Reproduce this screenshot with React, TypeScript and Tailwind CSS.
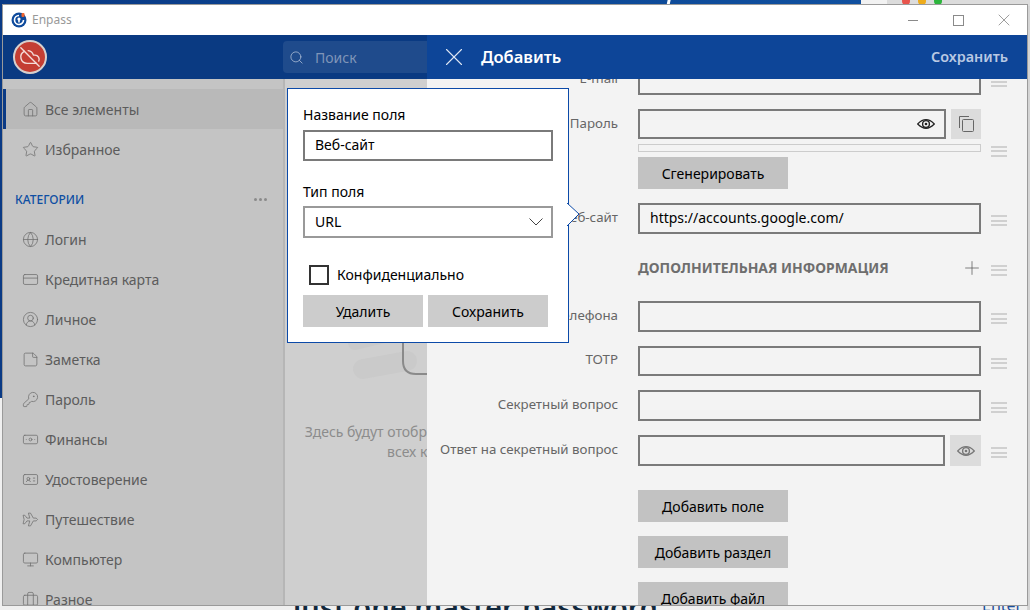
import React from "react";
import {
  Home, Star, Globe, CreditCard, CircleUserRound, StickyNote, KeyRound, Banknote, IdCard, Monitor, Briefcase,
  Search, X, Plus, CloudOff,
} from "lucide-react";

const font = "font-['Noto_Sans','Open_Sans',sans-serif]";

function PlaneIcon({ size, strokeWidth, className }: { size: number; strokeWidth: number; className?: string }) {
  return (
    <svg width={size} height={size} viewBox="0 0 24 24" fill="none" stroke="currentColor" strokeWidth={strokeWidth} strokeLinejoin="round" className={className}>
      <path d="M1.5 6 L4 6 L7 10 L11 10 L9 3 L12 3 L16 10 L20 10 Q24 12 20 14 L16 14 L12 21 L9 21 L11 14 L7 14 L4 18 L1.5 18 L3 12 Z" />
    </svg>
  );
}

function EyeIcon({ className }: { className?: string }) {
  return (
    <svg width="18" height="14" viewBox="0 0 18 14" fill="none" stroke="currentColor" className={className}>
      <path d="M0.7 7 Q9 -1.6 17.3 7 Q9 15.6 0.7 7 Z" strokeWidth="1.2" />
      <circle cx="9" cy="7" r="3.4" strokeWidth="1.4" />
      <circle cx="9" cy="7" r="1.3" fill="currentColor" stroke="none" />
    </svg>
  );
}

const cats = [
  ["Логин", Globe],
  ["Кредитная карта", CreditCard],
  ["Личное", CircleUserRound],
  ["Заметка", StickyNote],
  ["Пароль", KeyRound],
  ["Финансы", Banknote],
  ["Удостоверение", IdCard],
  ["Путешествие", PlaneIcon],
  ["Компьютер", Monitor],
  ["Разное", Briefcase],
] as const;

function NavRow({ label, Icon, active }: { label: string; Icon: any; active?: boolean }) {
  return (
    <div className={`h-10 shrink-0 flex items-center gap-[6px] text-[14px] text-[#5c5c5c] ${active ? "bg-[#b9b9b9] border-l-[3px] border-[#0b3a85] pl-[16px]" : "pl-[19px]"}`}>
      <Icon size={17} strokeWidth={1.1} className="text-[#707070] shrink-0" />
      <span>{label}</span>
    </div>
  );
}

function Handle() {
  return (
    <div className="w-4 flex flex-col gap-[2.5px] shrink-0 translate-y-[2px]">
      <div className="h-[2px] bg-[#d0d0d0]" />
      <div className="h-[2px] bg-[#d0d0d0]" />
      <div className="h-[2px] bg-[#d0d0d0]" />
    </div>
  );
}

function Field({ label, h = "h-[31px]", mt, value, after, noHandle, labelPull = "-mt-[2px]" }: { label: string; h?: string; mt: string; value?: string; after?: React.ReactNode; noHandle?: boolean; labelPull?: string }) {
  return (
    <div className={`flex items-center ${mt}`}>
      <div className={`w-[191px] text-right text-[13.3px] text-[#666] whitespace-nowrap shrink-0 ${labelPull}`}>{label}</div>
      <div className="ml-5 w-[343px] flex gap-[5px] shrink-0">
        <div className={`flex-1 ${h} border-2 border-[#7a7a7a] pl-[10px] pb-[2px] flex items-center text-[14px] text-black`}>{value}</div>
        {after}
      </div>
      {!noHandle && <div className="ml-[10px]"><Handle /></div>}
    </div>
  );
}

function Btn({ children, mt }: { children: React.ReactNode; mt: string }) {
  return (
    <div className={`ml-[211px] w-[150px] h-8 shrink-0 bg-[#c2c2c2] flex items-center justify-center text-[14px] text-black ${mt}`}>{children}</div>
  );
}

export default function App() {
  return (
    <div className={`relative w-[1030px] h-[610px] overflow-hidden bg-[#f0f0f0] ${font}`}>
      {/* desktop behind the window */}
      <div className="absolute left-0 top-0 w-[861px] h-[6px] bg-gradient-to-r from-[#0a3a85] to-[#10509f]" />
      <div className="absolute left-0 top-0 w-[3px] h-[398px] bg-[#0a3a85]" />
      <div className="absolute left-[861px] top-0 w-[26px] h-[6px] bg-[#f2f2f2]" />
      <div className="absolute left-[887px] top-0 w-[143px] h-[6px] bg-[#dcdcdc]" />
      <div className="absolute left-[667px] top-0 w-[3px] h-[6px] bg-white -skew-x-12" />
      <div className="absolute left-[902px] -top-[3px] w-2 h-2 rounded-full bg-[#e8544c]" />
      <div className="absolute left-[918px] -top-[3px] w-2 h-2 rounded-full bg-[#eeac1c]" />
      <div className="absolute left-[934px] -top-[3px] w-2 h-2 rounded-full bg-[#2db53d]" />
      <div className="absolute left-[1027px] top-[6px] w-[3px] h-[604px] bg-[#d4d4d4]" />
      <div className="absolute left-[293px] top-[590px] text-[29px] leading-[34px] font-semibold text-[#12283c] whitespace-nowrap">just one master password</div>
      <div className="absolute left-[982px] top-[594px] text-[16px] leading-[22px] text-[#1c4f9c]">Enter</div>

      {/* the window */}
      <div className="absolute left-[3px] top-[5px] w-[1024px] h-[600px] flex flex-col overflow-hidden shadow-[0_0_0_1px_#9a9a9a]">
        <div className="h-[30px] shrink-0 bg-white flex items-center">
          <svg width="16" height="16" viewBox="0 0 16 16" className="ml-[8px] shrink-0">
            <circle cx="8" cy="8" r="7.5" fill="#0e4a9c" />
            <path d="M8 3.5a4.5 4.5 0 1 0 4.5 4.5" fill="none" stroke="#fff" strokeWidth="1.6" />
            <circle cx="8" cy="7" r="1.6" fill="#fff" />
            <rect x="7.2" y="7.5" width="1.6" height="3" fill="#fff" />
            <rect x="10.5" y="1" width="3" height="4" rx="1" fill="#f0642d" />
          </svg>
          <span className="ml-[5px] text-[12px] text-[#999]">Enpass</span>
          <div className="ml-auto flex items-center">
            <div className="w-[10px] h-px bg-[#8a8a8a] mr-[35px]" />
            <div className="w-[11px] h-[11px] border border-[#8a8a8a] mr-[30px]" />
            <X size={20} strokeWidth={1} className="text-[#8a8a8a] mr-[13px]" />
          </div>
        </div>

        <div className="relative flex-1 flex min-h-0">
          {/* dimmed app */}
          <div className="w-[424px] shrink-0 flex flex-col">
            <div className="h-[44px] shrink-0 bg-[#0a3a82] flex items-center">
              <div className="ml-[10px] w-[34px] h-[34px] rounded-full bg-[#c43e33] border-2 border-[#d8d0cd] flex items-center justify-center">
                <CloudOff size={22} strokeWidth={1.5} className="text-[#f4dcd8]" />
              </div>
              <div className="ml-[236px] flex-1 h-8 bg-[#1f4b8c] rounded-l-sm flex items-center pl-[6px] gap-[11px]">
                <Search size={15} strokeWidth={1.2} className="text-[#b4c3da]" />
                <span className="text-[14px] text-[#7f95b8]">Поиск</span>
              </div>
            </div>
            <div className="flex-1 flex min-h-0">
              <div className="w-[280px] shrink-0 bg-[#c4c4c4] pt-[10px] flex flex-col overflow-hidden">
                <NavRow label="Все элементы" Icon={Home} active />
                <NavRow label="Избранное" Icon={Star} />
                <div className="mt-[10px] h-10 shrink-0 flex items-center justify-between pl-3 pr-4">
                  <span className="text-[12px] font-medium text-[#0f4fa3] translate-y-px">КАТЕГОРИИ</span>
                  <span className="flex gap-[2px]">
                    <i className="w-[3px] h-[3px] rounded-full bg-[#8a8a8a]" />
                    <i className="w-[3px] h-[3px] rounded-full bg-[#8a8a8a]" />
                    <i className="w-[3px] h-[3px] rounded-full bg-[#8a8a8a]" />
                  </span>
                </div>
                {cats.map(([l, I]) => <NavRow key={l} label={l} Icon={I} />)}
              </div>
              <div className="relative flex-1 min-w-0 bg-[#cfcfcf] border-l-2 border-[#b6b6b6] overflow-hidden">
                <svg width="142" height="120" viewBox="0 0 142 120" className="absolute left-0 top-[220px]">
                  <path d="M70 44 L112 34" stroke="#cacaca" strokeWidth="14" strokeLinecap="round" />
                  <path d="M78 70 L122 62" stroke="#cacaca" strokeWidth="20" strokeLinecap="round" />
                  <path d="M118 20 V62 Q118 75 131 75 H142" fill="none" stroke="#8a8a8a" strokeWidth="2" />
                </svg>
                <div className="absolute left-[17px] top-[343px] w-[272px] text-center text-[14px] leading-[20px] text-[#8c8c8c]">
                  Здесь будут отображаться элементы из всех категорий
                </div>
              </div>
            </div>
          </div>

          {/* add-item panel */}
          <div className="w-[600px] shrink-0 flex flex-col min-h-0">
            <div className="h-[44px] shrink-0 bg-[#0d4598] flex items-center pl-[12px] pr-[19px] relative z-10">
              <X size={30} strokeWidth={0.9} className="text-[#dfe7f3]" />
              <span className="ml-[12px] text-[16.5px] font-semibold text-white">Добавить</span>
              <span className="ml-auto text-[14.4px] font-semibold text-[#b9c9e3]">Сохранить</span>
            </div>
            <div className="flex-1 bg-[#f3f3f3] overflow-hidden flex flex-col min-h-0">
              <div className="-mt-[15px] flex flex-col">
                <Field label="E-mail" mt="" />
                <Field
                  label="Пароль"
                  mt="mt-[14px]"
                  h="h-[30px]"
                  noHandle
                  labelPull="mt-0"
                  after={
                    <div className="w-[30px] h-[30px] bg-[#dcdcdc] flex items-center justify-center shrink-0">
                      <svg width="15" height="16" viewBox="0 0 15 16" fill="none" stroke="#666" strokeWidth="1">
                        <path d="M0.5 12 V0.5 H10" />
                        <rect x="3.5" y="3.5" width="11" height="12" rx="1" />
                      </svg>
                    </div>
                  }
                />
              </div>
              <div className="flex items-center mt-[5px] h-2">
                <div className="ml-[211px] w-[343px] h-2 border border-[#ccc] shrink-0" />
                <div className="ml-[10px] translate-y-px"><Handle /></div>
              </div>
              <Btn mt="mt-[5px]">Сгенерировать</Btn>
              <Field label="Веб-сайт" mt="mt-[14px]" value="https://accounts.google.com/" />
              <div className="flex items-center mt-6 h-5">
                <div className="ml-[211px] w-[343px] flex items-center justify-between">
                  <span className="text-[13.9px] font-bold text-[#6e6e6e] whitespace-nowrap">ДОПОЛНИТЕЛЬНАЯ ИНФОРМАЦИЯ</span>
                  <Plus size={22} strokeWidth={0.8} className="text-[#555] -mr-[2px]" />
                </div>
                <div className="ml-[10px]"><Handle /></div>
              </div>
              <Field label="Номер телефона" mt="mt-[23px]" />
              <Field label="TOTP" mt="mt-[14px]" h="h-[30px]" />
              <Field label="Секретный вопрос" mt="mt-[14px]" />
              <Field
                label="Ответ на секретный вопрос"
                mt="mt-[14px]"
                after={
                  <div className="w-[31px] h-[31px] bg-[#dcdcdc] flex items-center justify-center shrink-0">
                    <EyeIcon className="text-[#777]" />
                  </div>
                }
              />
              <Btn mt="mt-6">Добавить поле</Btn>
              <Btn mt="mt-[14px]">Добавить раздел</Btn>
              <Btn mt="mt-[14px]">Добавить файл</Btn>
            </div>
          </div>

          {/* eye inside the password box */}
          <EyeIcon className="absolute left-[914px] top-[82px] text-[#222]" />

          {/* field popup */}
          <div className="absolute left-[284px] top-[53px] w-[282px] h-[255px] bg-white border border-[#0c4aa8] px-[15px] pt-4 z-20 text-[14px] text-black">
            <div className="leading-5">Название поля</div>
            <div className="mt-[5px] w-[250px] h-[31px] border-2 border-[#7a7a7a] flex items-center pl-[10px] pb-[2px]">Веб-сайт</div>
            <div className="mt-[21px] leading-5">Тип поля</div>
            <div className="mt-[4px] w-[250px] h-8 border-2 border-[#999] flex items-center justify-between pl-[10px] pr-[8px] pb-[2px]">
              <span>URL</span>
              <svg width="14" height="8" viewBox="0 0 14 8" fill="none" stroke="#444" strokeWidth="1" className="mt-[2px]">
                <path d="M0.5 0.5 L7 7 L13.5 0.5" />
              </svg>
            </div>
            <div className="mt-[26px] ml-[6px] flex items-center gap-2">
              <div className="w-5 h-5 border-2 border-[#333]" />
              <span>Конфиденциально</span>
            </div>
            <div className="mt-[10px] flex gap-[5px]">
              <div className="w-[120px] h-8 bg-[#ccc] flex items-center justify-center">Удалить</div>
              <div className="w-[120px] h-8 bg-[#ccc] flex items-center justify-center">Сохранить</div>
            </div>
            <svg width="13" height="24" viewBox="0 0 13 24" className="absolute -right-[12px] top-[114px]">
              <path d="M0 0 L12 11 L0 23" fill="#fff" stroke="#0c4aa8" strokeWidth="1" />
            </svg>
          </div>
        </div>
      </div>
    </div>
  );
}
